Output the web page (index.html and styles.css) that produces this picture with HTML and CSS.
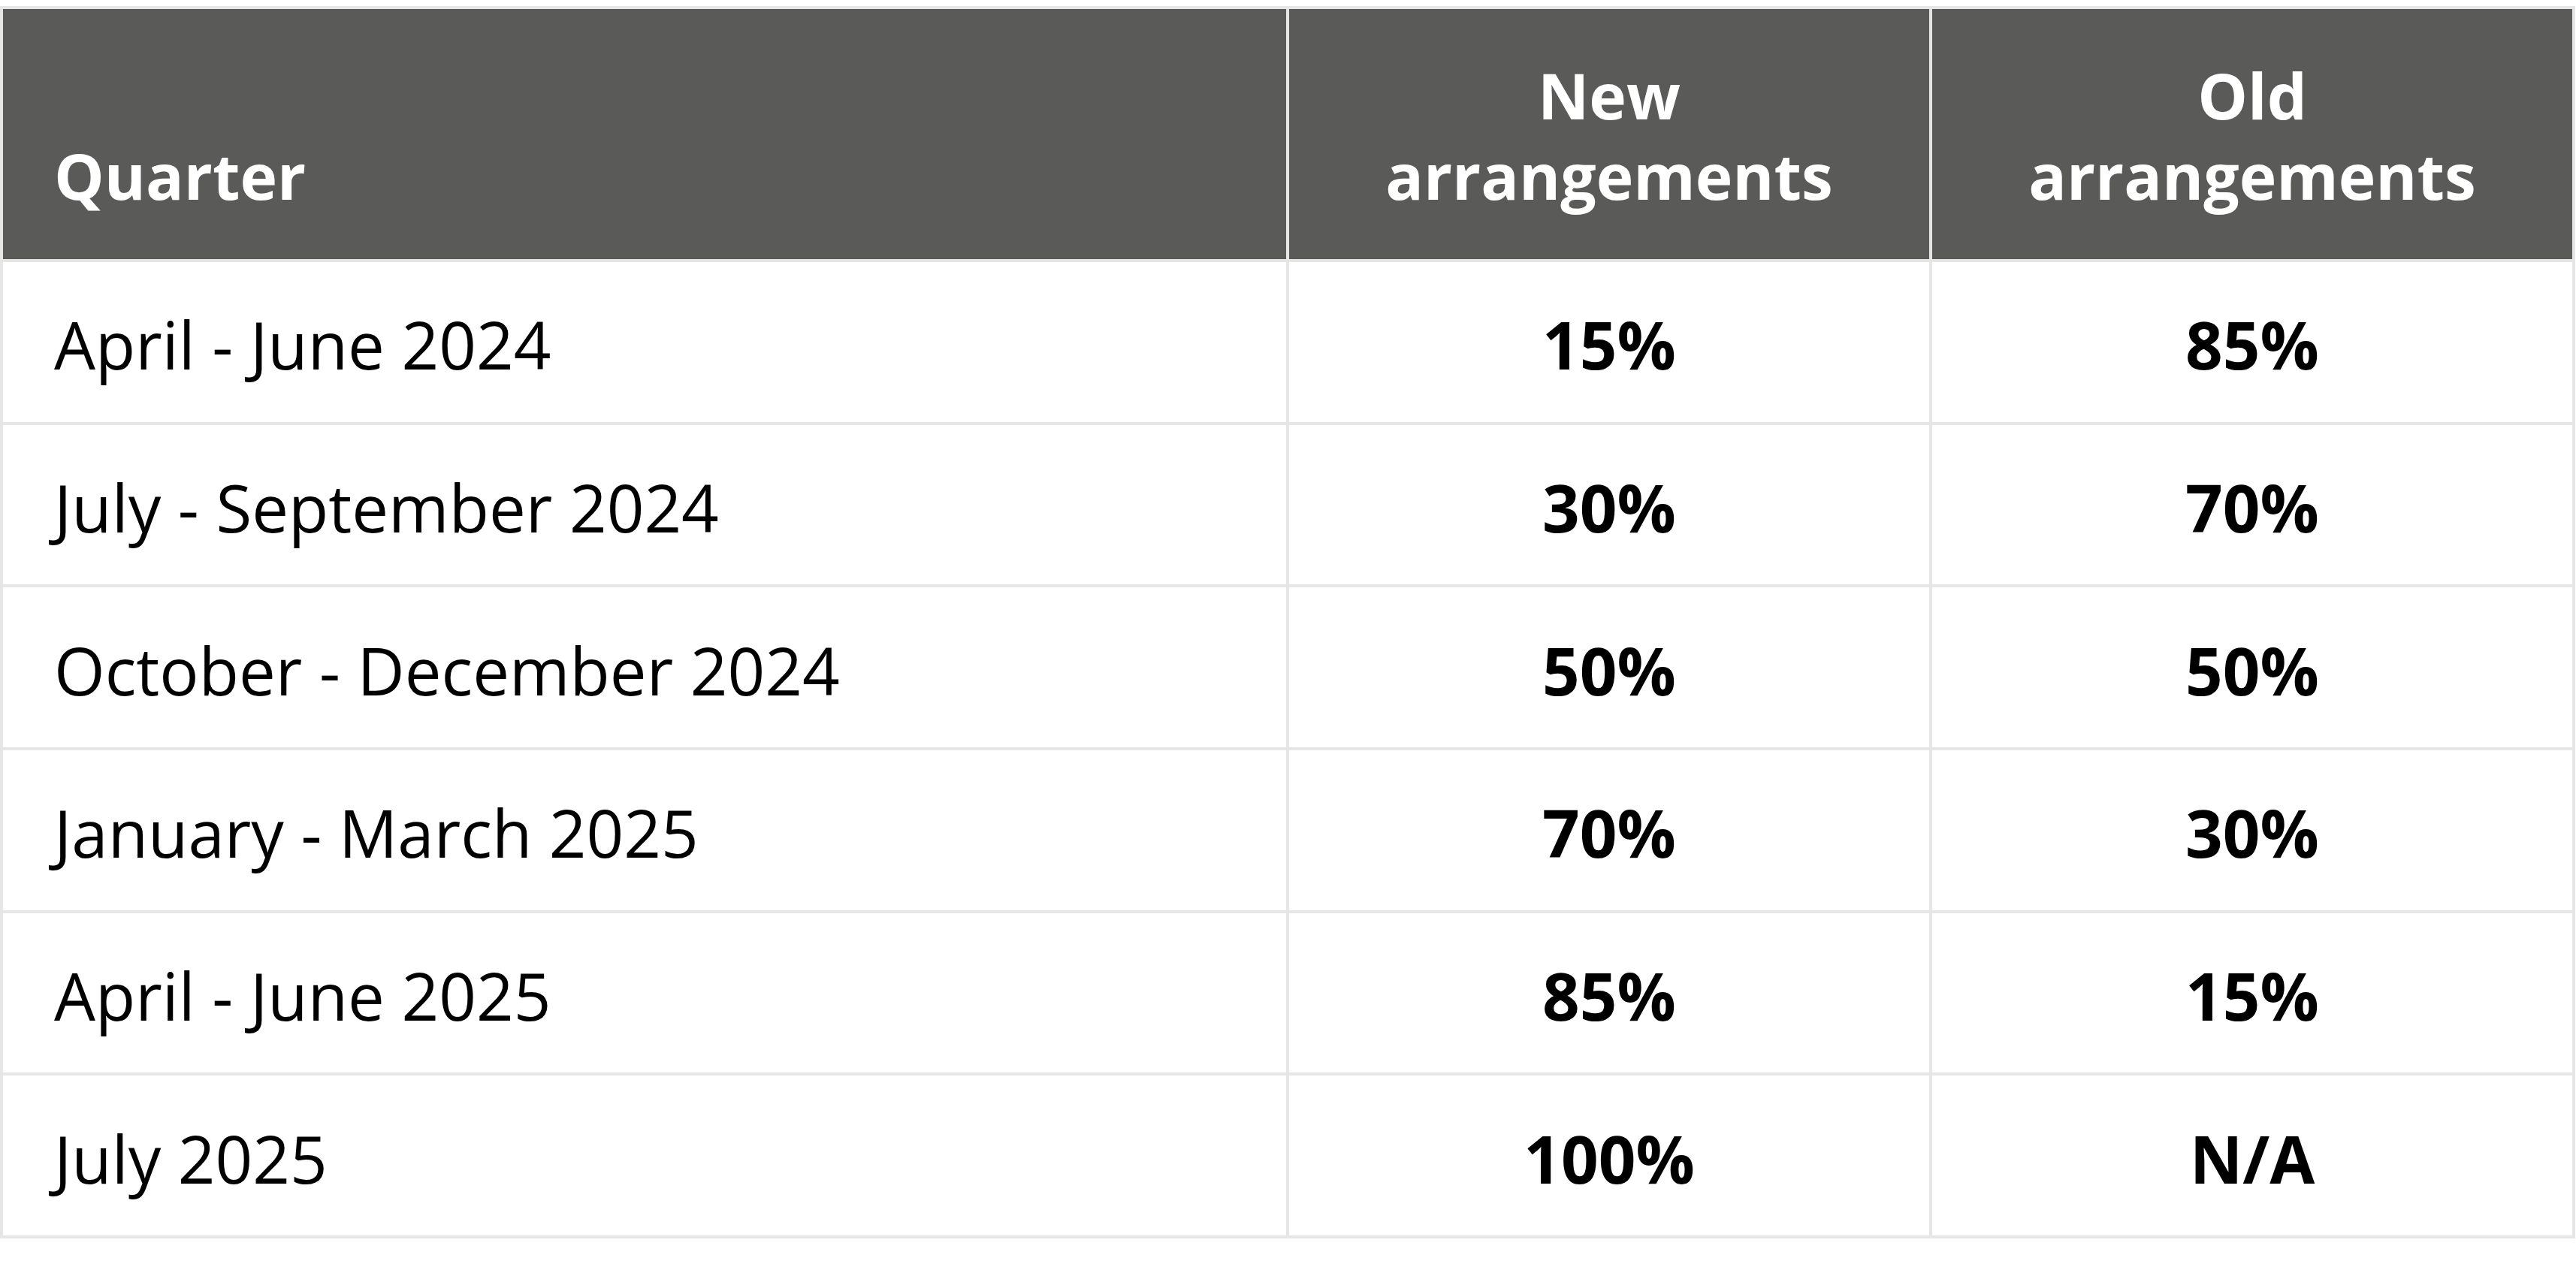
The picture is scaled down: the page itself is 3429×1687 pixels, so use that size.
FILE: index.html
```html
<!DOCTYPE html>
<html lang="en">
<head>
<meta charset="utf-8">
<title>Transition arrangements</title>
<link rel="stylesheet" href="styles.css">
</head>
<body>
<div class="page">
  <table class="schedule">
    <colgroup>
      <col class="col-quarter">
      <col class="col-value">
      <col class="col-value">
    </colgroup>
    <thead>
      <tr>
        <th class="head-left">Quarter</th>
        <th class="head-center">New<br>arrangements</th>
        <th class="head-center">Old<br>arrangements</th>
      </tr>
    </thead>
    <tbody>
      <tr><td class="label">April - June 2024</td><td class="value">15%</td><td class="value">85%</td></tr>
      <tr><td class="label">July - September 2024</td><td class="value">30%</td><td class="value">70%</td></tr>
      <tr><td class="label">October - December 2024</td><td class="value">50%</td><td class="value">50%</td></tr>
      <tr><td class="label">January - March 2025</td><td class="value">70%</td><td class="value">30%</td></tr>
      <tr><td class="label">April - June 2025</td><td class="value">85%</td><td class="value">15%</td></tr>
      <tr><td class="label">July 2025</td><td class="value">100%</td><td class="value">N/A</td></tr>
    </tbody>
  </table>
</div>
</body>
</html>
```

FILE: styles.css
```css
html, body {
  margin: 0;
  padding: 0;
  background: #ffffff;
}

.page {
  padding-top: 8px;
  font-family: "Open Sans", "Noto Sans", sans-serif;
  color: #000000;
}

.schedule {
  width: 3428px;
  border-collapse: collapse;
  table-layout: fixed;
  border: 4px solid #e6e6e6;
}

.col-quarter { width: 50%; }
.col-value { width: 25%; }

.schedule th,
.schedule td {
  border: 4px solid #e6e6e6;
  padding: 0;
}

.schedule th {
  background: #5a5a58;
  color: #ffffff;
  font-weight: 700;
  font-size: 84px;
  line-height: 107px;
  height: 337px;
  vertical-align: bottom;
  padding-bottom: 58px;
  box-sizing: border-box;
}

.head-left {
  text-align: left;
  padding-left: 68px !important;
}

.head-center {
  text-align: center;
}

.schedule td {
  height: 216.67px;
  box-sizing: border-box;
  font-size: 87px;
  line-height: 104px;
  vertical-align: middle;
  padding-top: 6px;
}

.label {
  text-align: left;
  font-weight: 400;
  padding-left: 68px !important;
}

.value {
  text-align: center;
  font-weight: 700;
}
```
